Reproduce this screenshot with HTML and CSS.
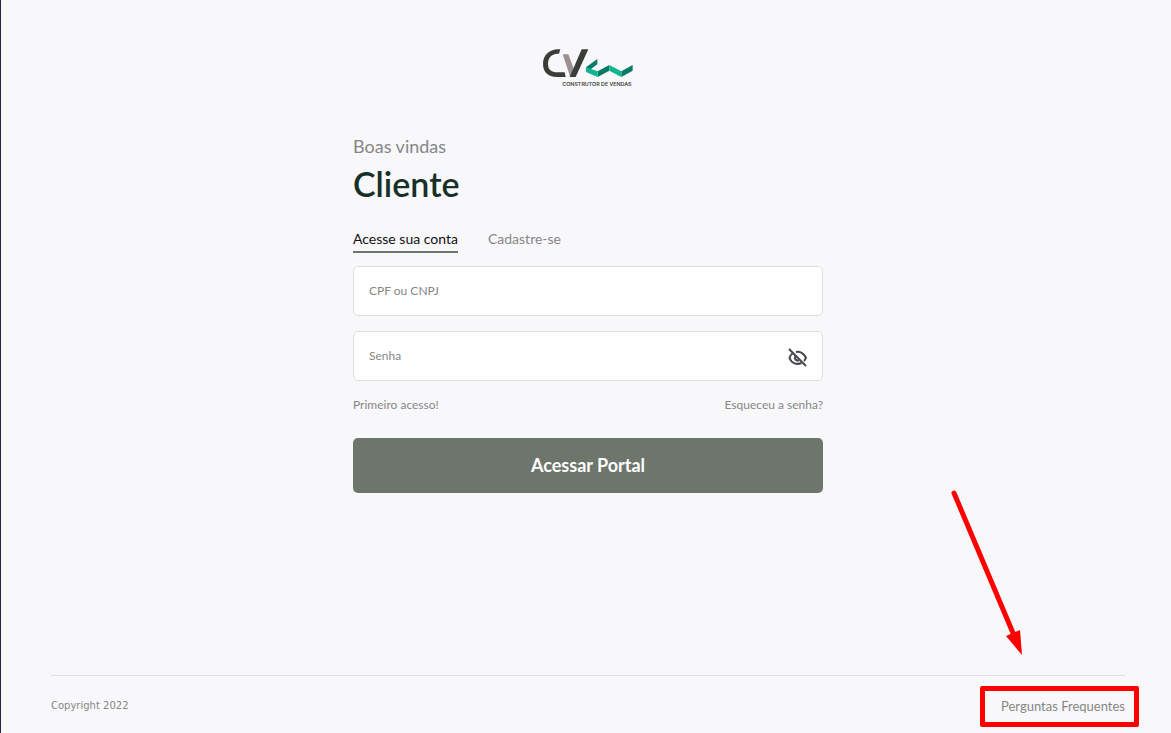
FILE: index.html
```html
<!DOCTYPE html>
<html lang="pt-BR">
<head>
    <meta charset="UTF-8">
    <meta name="viewport" content="width=device-width, initial-scale=1.0">
    <title>Portal do Cliente</title>
    <link rel="stylesheet" href="styles.css">
</head>
<body>

<main class="login">
    <svg class="logo" viewBox="30 18 288 132" role="img" aria-label="CV Construtor de Vendas">
        <path class="logo-dark" d="M84 28 H91 L87 41 H82 C64 42 54 54 54 72 C54 89 65 97 82 97 H104 L107 111 H80 C55 111 39 96 39 72 C39 46 57 29 84 28 Z"/>
        <path class="logo-gray" d="M98 43 H115 L132 88 L121 111 Z"/>
        <path class="logo-dark" d="M155 28 H175 L137 111 H119 Z"/>
        <path class="logo-green-dark" d="M168 82 L202 57 V73 L180 89 Z M203 94 L238 75 V92 L203 111 Z M274 94 L308 75 V92 L274 111 Z"/>
        <path class="logo-green" d="M168 82 L203 94 V111 L168 96 Z M238 75 L274 94 V111 L238 92 Z"/>
        <text class="logo-text" x="97" y="138">CONSTRUTOR DE VENDAS</text>
    </svg>

    <p class="welcome">Boas vindas</p>
    <h1 class="title">Cliente</h1>

    <nav class="tabs">
        <a href="#conta" class="tab tab-active">Acesse sua conta</a>
        <a href="#cadastro" class="tab">Cadastre-se</a>
    </nav>

    <form class="form" id="conta">
        <input type="text" class="field" placeholder="CPF ou CNPJ" aria-label="CPF ou CNPJ">
        <div class="password">
            <input type="password" class="field" id="senha" placeholder="Senha" aria-label="Senha">
            <button type="button" class="toggle" aria-label="Mostrar senha" onclick="toggleSenha()">
                <svg viewBox="0 0 20 20">
                    <path d="M1 1 L18 18"/>
                    <path d="M8 4 C13 3 16 6 18 10 C17 11.500 17 12 16 13"/>
                    <path d="M4.500 5.500 C3 6.500 2 8 1.500 10 C3.500 15.500 9 17 13.500 15"/>
                    <path d="M7.500 8 C6 10.500 7.500 13 11 12.500"/>
                </svg>
            </button>
        </div>
        <div class="links">
            <a href="#primeiro">Primeiro acesso!</a>
            <a href="#esqueceu">Esqueceu a senha?</a>
        </div>
        <button type="submit" class="submit">Acessar Portal</button>
    </form>
</main>

<footer class="footer">
    <span class="copyright">Copyright 2022</span>
    <div class="faq">
        <a href="#faq">Perguntas Frequentes</a>
        <span class="highlight"></span>
        <svg class="arrow" viewBox="0 0 80 170" aria-hidden="true">
            <path class="arrow-line" d="M9 6 L68 146"/>
            <path class="arrow-head" d="M61 149 L75 143 L77 168 Z"/>
        </svg>
    </div>
</footer>

<script>
    // Show or hide the password
    function toggleSenha() {
        const senha = document.getElementById('senha');
        senha.type = senha.type === 'password' ? 'text' : 'password';
    }
</script>

</body>
</html>
```
FILE: styles.css
```css
* {
    box-sizing: border-box;
}

body {
    display: flex;
    flex-direction: column;
    min-height: 100vh;
    margin: 0;
    padding: 0 46px 0 50px;
    border-left: 1px solid #2b2038;
    background-color: #f8f8fb;
    color: #868686;
    font-family: Lato, "Liberation Sans", sans-serif;
    overflow-x: hidden;
}

a {
    color: inherit;
    text-decoration: none;
}

/* Login column */
.login {
    display: flex;
    flex-direction: column;
    flex: 1;
    width: 100%;
    max-width: 470px;
    margin: 0 auto;
    padding-top: 46px;
}

.logo {
    width: 96px;
    height: 44px;
    align-self: center;
}

.logo-dark {
    fill: #3b3d38;
}

.logo-gray {
    fill: #9c9190;
}

.logo-green {
    fill: #10b48e;
}

.logo-green-dark {
    fill: #087a65;
}

.logo-text {
    fill: #3b3d38;
    font-family: Inter, sans-serif;
    font-size: 16px;
    font-weight: 600;
}

.welcome {
    margin: 43px 0 0;
    font-size: 18px;
    line-height: 26px;
}

.title {
    margin: 4px 0 0;
    color: #173028;
    font-size: 34px;
    font-weight: 600;
    line-height: 42px;
}

.tabs {
    display: flex;
    gap: 30px;
    margin-top: 24px;
    font-size: 14px;
    line-height: 20px;
}

.tab {
    padding-bottom: 2px;
    border-bottom: 2px solid transparent;
}

.tab-active {
    border-color: #6d756c;
    color: #111;
}

/* Form */
.form {
    display: flex;
    flex-direction: column;
    margin-top: 13px;
}

.field {
    width: 100%;
    height: 50px;
    padding: 0 15px 2px;
    border: 1px solid #dedede;
    border-radius: 5px;
    background-color: #fff;
    font-family: inherit;
    font-size: 12px;
}

.field::placeholder {
    color: #868686;
}

.password {
    position: relative;
    margin-top: 15px;
}

.toggle {
    position: absolute;
    top: 17px;
    right: 15px;
    width: 20px;
    height: 20px;
    padding: 0;
    border: 0;
    background: none;
    cursor: pointer;
}

.toggle svg {
    display: block;
    fill: none;
    stroke: #45464a;
    stroke-width: 2;
}

.links {
    display: flex;
    justify-content: space-between;
    margin-top: 15px;
    font-size: 12px;
    line-height: 18px;
}

.submit {
    height: 55px;
    margin-top: 24px;
    padding: 0 0 2px;
    border: 0;
    border-radius: 5px;
    background-color: #6d756c;
    color: #fff;
    font-family: inherit;
    font-size: 18px;
    font-weight: 700;
    cursor: pointer;
}

/* Footer */
.footer {
    display: flex;
    align-items: center;
    justify-content: space-between;
    height: 58px;
    padding-top: 2px;
    border-top: 1px solid #dedede;
}

.copyright {
    font-family: "DejaVu Sans", sans-serif;
    font-size: 10px;
}

.faq {
    position: relative;
    font-size: 13px;
    line-height: 20px;
}

.highlight {
    position: absolute;
    inset: -10px -14px -11px -21px;
    border: 5px solid #f00;
    border-radius: 2px;
    pointer-events: none;
}

/* Arrow that points at the link */
.arrow {
    position: absolute;
    right: 100px;
    bottom: 59px;
    width: 80px;
    height: 170px;
    pointer-events: none;
}

.arrow-line {
    fill: none;
    stroke: #f00;
    stroke-width: 5;
    stroke-linecap: round;
}

.arrow-head {
    fill: #f00;
}
```
